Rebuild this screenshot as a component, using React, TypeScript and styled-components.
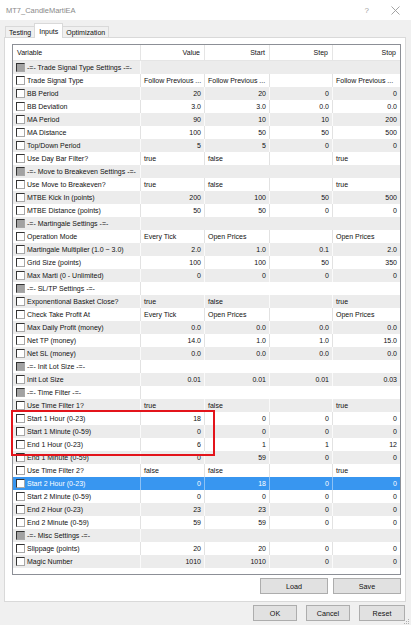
import React from "react";
import styled, { createGlobalStyle } from "styled-components";

type Row = {
  label: string;
  section?: boolean;
  text?: boolean;
  value?: string;
  start?: string;
  step?: string;
  stop?: string;
};

const sec = (label: string): Row => ({ label: `-=- ${label} -=-`, section: true });
const num = (label: string, value: string, start: string, step: string, stop: string): Row => ({
  label,
  value,
  start,
  step,
  stop,
});
const txt = (label: string, value: string, start: string, stop: string): Row => ({
  label,
  text: true,
  value,
  start,
  step: "",
  stop,
});

const rows: Row[] = [
  sec("Trade Signal Type Settings"),
  txt("Trade Signal Type", "Follow Previous ...", "Follow Previous ...", "Follow Previous ..."),
  num("BB Period", "20", "20", "0", "0"),
  num("BB Deviation", "3.0", "3.0", "0.0", "0.0"),
  num("MA Period", "90", "10", "10", "200"),
  num("MA Distance", "100", "50", "50", "500"),
  num("Top/Down Period", "5", "5", "0", "0"),
  txt("Use Day Bar Filter?", "true", "false", "true"),
  sec("Move to Breakeven Settings"),
  txt("Use Move to Breakeven?", "true", "false", "true"),
  num("MTBE Kick In (points)", "200", "100", "50", "500"),
  num("MTBE Distance (points)", "50", "50", "0", "0"),
  sec("Martingale Settings"),
  txt("Operation Mode", "Every Tick", "Open Prices", "Open Prices"),
  num("Martingale Multiplier (1.0 ~ 3.0)", "2.0", "1.0", "0.1", "2.0"),
  num("Grid Size (points)", "100", "100", "50", "350"),
  num("Max Marti (0 - Unlimited)", "0", "0", "0", "0"),
  sec("SL/TP Settings"),
  txt("Exponentional Basket Close?", "true", "false", "true"),
  txt("Check Take Profit At", "Every Tick", "Open Prices", "Open Prices"),
  num("Max Daily Profit (money)", "0.0", "0.0", "0.0", "0.0"),
  num("Net TP (money)", "14.0", "1.0", "1.0", "15.0"),
  num("Net SL (money)", "0.0", "0.0", "0.0", "0.0"),
  sec("Init Lot Size"),
  num("Init Lot Size", "0.01", "0.01", "0.01", "0.03"),
  sec("Time Filter"),
  txt("Use Time Filter 1?", "true", "false", "true"),
  num("Start 1 Hour (0-23)", "18", "0", "0", "0"),
  num("Start 1 Minute (0-59)", "0", "0", "0", "0"),
  num("End 1 Hour (0-23)", "6", "1", "1", "12"),
  num("End 1 Minute (0-59)", "0", "59", "0", "0"),
  txt("Use Time Filter 2?", "false", "false", "true"),
  num("Start 2 Hour (0-23)", "0", "18", "0", "0"),
  num("Start 2 Minute (0-59)", "0", "0", "0", "0"),
  num("End 2 Hour (0-23)", "23", "23", "0", "0"),
  num("End 2 Minute (0-59)", "59", "59", "0", "0"),
  sec("Misc Settings"),
  num("Slippage (points)", "20", "20", "0", "0"),
  num("Magic Number", "1010", "1010", "0", "0"),
];

const SELECTED = 32;
const ROW_H = 13;

const GlobalStyle = createGlobalStyle`
  html, body {
    margin: 0;
    padding: 0;
    background: #f0f0f0;
  }
  body {
    font-family: "Liberation Sans", Arial, sans-serif;
    font-size: 7px;
    color: #111;
  }
`;

export default function App() {
  return (
    <>
      <GlobalStyle />
      <Window>
        <TitleBar>
          <Title>MT7_CandleMartiEA</Title>
          <TitleButtons>
            <Help>?</Help>
            <svg width="9" height="9" viewBox="0 0 9 9">
              <path d="M0.5 0.5 L8.5 8.5 M8.5 0.5 L0.5 8.5" stroke="#9a9a9a" strokeWidth="0.9" />
            </svg>
          </TitleButtons>
        </TitleBar>

        <TabStrip>
          <Tab>Testing</Tab>
          <Tab $active>Inputs</Tab>
          <Tab>Optimization</Tab>
        </TabStrip>

        <Panel>
          <ListBox>
            <HeaderRow>
              <HeadCell $left>Variable</HeadCell>
              <HeadCell>Value</HeadCell>
              <HeadCell>Start</HeadCell>
              <HeadCell>Step</HeadCell>
              <HeadCell $last>Stop</HeadCell>
            </HeaderRow>
            <Rows>
              {rows.map((r, i) => {
                const shade = i % 2 === 0;
                const sel = i === SELECTED;
                return (
                  <RowLine key={i} $shade={shade} $selected={sel}>
                    <NameCell $shade={shade} $selected={sel}>
                      <Check $disabled={r.section} />
                      <span>{r.label}</span>
                    </NameCell>
                    {r.section ? (
                      <SpanCell />
                    ) : (
                      <>
                        <Cell $shade={shade} $selected={sel} $text={r.text}>
                          {r.value}
                        </Cell>
                        <Cell $shade={shade} $selected={sel} $text={r.text}>
                          {r.start}
                        </Cell>
                        <Cell $shade={shade} $selected={sel} $text={r.text}>
                          {r.step}
                        </Cell>
                        <Cell $shade={shade} $selected={sel} $text={r.text} $last>
                          {r.stop}
                        </Cell>
                      </>
                    )}
                  </RowLine>
                );
              })}
              <Highlight />
            </Rows>
          </ListBox>

          <FileButtons>
            <Button $w={68}>Load</Button>
            <Button $w={68}>Save</Button>
          </FileButtons>
        </Panel>

        <DialogButtons>
          <Button $w={44}>OK</Button>
          <Button $w={44}>Cancel</Button>
          <Button $w={46}>Reset</Button>
          <Grip width="6" height="6" viewBox="0 0 6 6">
            <rect x="4" y="0" width="1" height="1" fill="#b0b0b0" />
            <rect x="2" y="2" width="1" height="1" fill="#b0b0b0" />
            <rect x="4" y="2" width="1" height="1" fill="#b0b0b0" />
            <rect x="0" y="4" width="1" height="1" fill="#b0b0b0" />
            <rect x="2" y="4" width="1" height="1" fill="#b0b0b0" />
            <rect x="4" y="4" width="1" height="1" fill="#b0b0b0" />
          </Grip>
        </DialogButtons>
      </Window>
    </>
  );
}

const Window = styled.div`
  position: relative;
  width: 411px;
  height: 625px;
  display: flex;
  flex-direction: column;
  background: #f0f0f0;
  overflow: hidden;
`;

const TitleBar = styled.div`
  height: 20px;
  display: flex;
  align-items: center;
  justify-content: space-between;
  padding: 0 11px 0 6px;
  background: #fff;
`;

const Title = styled.span`
  font-size: 7.5px;
  color: #8a8a8a;
`;

const TitleButtons = styled.div`
  display: flex;
  align-items: center;
  gap: 22px;
`;

const Help = styled.span`
  font-size: 8px;
  color: #a0a0a0;
`;

const TabStrip = styled.div`
  height: 17px;
  display: flex;
  align-items: flex-end;
  padding-left: 5px;
`;

const Tab = styled.div<{ $active?: boolean }>`
  position: relative;
  z-index: ${(p) => (p.$active ? 1 : 0)};
  height: ${(p) => (p.$active ? 13 : 10)}px;
  margin-bottom: ${(p) => (p.$active ? -1 : 0)}px;
  margin-right: -1px;
  padding: ${(p) => (p.$active ? "1px 4px 0" : "0 3px")};
  display: flex;
  align-items: center;
  border: 1px solid #d9d9d9;
  border-bottom: none;
  background: ${(p) => (p.$active ? "#fff" : "#f0f0f0")};
  color: #111;
  white-space: nowrap;
`;

const Panel = styled.div`
  height: 565px;
  box-sizing: border-box;
  margin: 0 5px 0 4px;
  padding: 6px 4px 0 7px;
  border: 1px solid #d9d9d9;
  background: #fff;
  display: flex;
  flex-direction: column;
`;

const ListBox = styled.div`
  width: 389px;
  height: 531px;
  box-sizing: border-box;
  border: 1px solid #8c8f96;
  background: #fff;
`;

const HeaderRow = styled.div`
  display: grid;
  grid-template-columns: 128px 64px 65px 63px 67px;
  height: 16px;
  border-bottom: 1px solid #e5e5e5;
  box-sizing: border-box;
`;

const HeadCell = styled.div<{ $left?: boolean; $last?: boolean }>`
  display: flex;
  align-items: center;
  justify-content: ${(p) => (p.$left ? "flex-start" : "flex-end")};
  padding: 0 4px;
  border-right: ${(p) => (p.$last ? "none" : "1px solid #e5e5e5")};
`;

const Rows = styled.div`
  position: relative;
`;

const RowLine = styled.div<{ $shade: boolean; $selected: boolean }>`
  display: grid;
  grid-template-columns: 128px 64px 65px 63px 67px;
  height: ${ROW_H}px;
  line-height: ${ROW_H}px;
  background: ${(p) => (p.$selected ? "#3896f0" : p.$shade ? "#ececec" : "#fff")};
  color: ${(p) => (p.$selected ? "#fff" : "#111")};
  white-space: nowrap;
`;

const sepColor = (p: { $shade: boolean; $selected: boolean }) =>
  p.$selected ? "#8cc1f5" : p.$shade ? "#fafafa" : "#e2e2e2";

const NameCell = styled.div<{ $shade: boolean; $selected: boolean }>`
  display: flex;
  align-items: center;
  gap: 2px;
  padding-left: 3px;
  overflow: hidden;
  border-right: 1px solid ${sepColor};
`;

const Check = styled.span<{ $disabled?: boolean }>`
  flex: none;
  width: 9px;
  height: 9px;
  box-sizing: border-box;
  border: 1px solid;
  border-color: #333 #a8a8a8 #a8a8a8 #333;
  background: ${(p) => (p.$disabled ? "#a2a2a2" : "#fff")};
`;

const Cell = styled.div<{ $shade: boolean; $selected: boolean; $text?: boolean; $last?: boolean }>`
  padding: ${(p) => (p.$text ? "0 0 0 3px" : "0 3px 0 0")};
  text-align: ${(p) => (p.$text ? "left" : "right")};
  overflow: hidden;
  border-right: ${(p) => (p.$last ? "none" : `1px solid ${sepColor(p)}`)};
`;

const SpanCell = styled.div`
  grid-column: span 4;
`;

const Highlight = styled.div`
  position: absolute;
  top: ${27 * ROW_H - 2}px;
  left: -2px;
  width: 200px;
  height: ${3 * ROW_H + 3}px;
  border: 2px solid #e3141b;
  pointer-events: none;
`;

const FileButtons = styled.div`
  display: flex;
  justify-content: flex-end;
  gap: 5px;
  width: 389px;
  margin-top: 3px;
`;

const Button = styled.div<{ $w: number }>`
  width: ${(p) => p.$w}px;
  height: 16px;
  box-sizing: border-box;
  display: flex;
  align-items: center;
  justify-content: center;
  border: 1px solid #adadad;
  background: #e1e1e1;
  color: #111;
  font-size: 7.2px;
`;

const DialogButtons = styled.div`
  position: relative;
  display: flex;
  justify-content: flex-end;
  gap: 9px;
  padding: 3px 6px 0 0;
`;

const Grip = styled.svg`
  position: absolute;
  right: 1px;
  bottom: -4px;
`;
